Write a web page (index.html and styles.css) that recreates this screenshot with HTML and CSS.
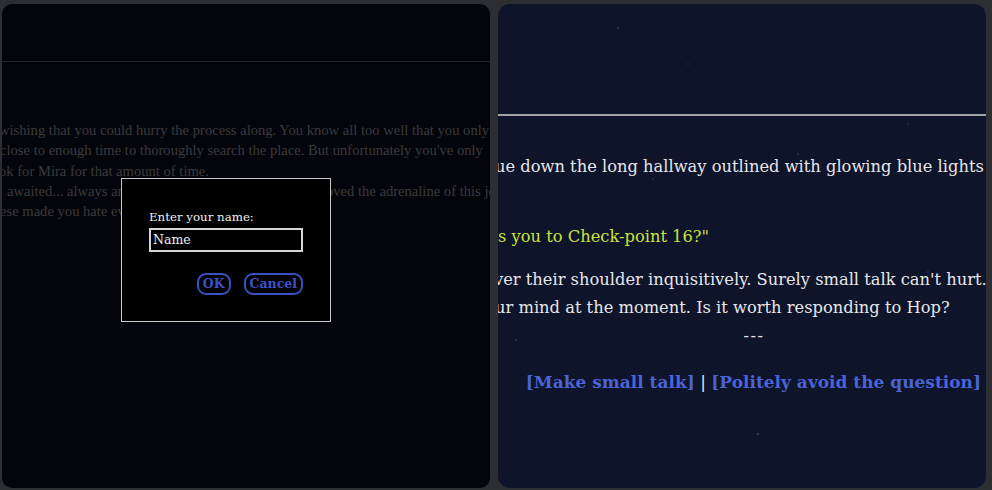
FILE: index.html
```html
<!DOCTYPE html>
<html>
<head>
<meta charset="utf-8">
<link rel="stylesheet" href="styles.css">
</head>
<body>
<div class="screen">
  <section class="panel panel-left">
    <div class="head head-left"></div>
    <div class="story dim">
      <div class="line l1">wishing that you could hurry the process along. You know all too well that you only</div>
      <div class="line l2">close to enough time to thoroughly search the place. But unfortunately you've only</div>
      <div class="line l3">ok for Mira for that amount of time.</div>
      <div class="line l4">awaited... always and ever it seemed. But you always loved the adrenaline of this job</div>
      <div class="line l5">ese made you hate every second of it.</div>
    </div>
    <div class="dialog">
      <label class="dlg-label">Enter your name:</label>
      <div class="dlg-input">Name</div>
      <div class="dlg-buttons">
        <span class="btn">OK</span>
        <span class="btn">Cancel</span>
      </div>
    </div>
  </section>
  <section class="panel panel-right">
    <div class="head head-right"></div>
    <div class="story bright">
      <div class="line r1">ue down the long hallway outlined with glowing blue lights</div>
      <div class="line r2 speech">s you to Check-point 16?"</div>
      <div class="line r3">ver their shoulder inquisitively. Surely small talk can't hurt..</div>
      <div class="line r4">ur mind at the moment. Is it worth responding to Hop?</div>
      <div class="line sep">---</div>
      <div class="line choices"><a class="choice">[Make small talk]</a> <span class="bar">|</span> <a class="choice">[Politely avoid the question]</a></div>
    </div>
  </section>
</div>
</body>
</html>
```

FILE: styles.css
```css
html, body {
  margin: 0;
  padding: 0;
  background: #2d2e32;
  width: 992px;
  height: 490px;
  overflow: hidden;
}

.screen {
  display: flex;
  gap: 8px;
  padding: 4px 6px 0 2px;
  height: 486px;
  box-sizing: border-box;
  font-family: "DejaVu Serif", serif;
}

.panel {
  position: relative;
  width: 488px;
  height: 484px;
  overflow: hidden;
  flex: none;
}

.panel-left {
  background: #04050a;
  border-radius: 10px;
}

.panel-right {
  background-color: #0e1429;
  background-image:
    radial-gradient(circle at 120px 24px, #1f2b4d 0 1px, transparent 1.5px),
    radial-gradient(circle at 190px 60px, #1c2746 0 1px, transparent 1.5px),
    radial-gradient(circle at 300px 150px, #1f2b4d 0 1px, transparent 1.5px),
    radial-gradient(circle at 260px 430px, #2c3c6c 0 1px, transparent 1.5px),
    radial-gradient(circle at 155px 175px, #1c2746 0 1px, transparent 1.5px),
    radial-gradient(circle at 430px 268px, #1f2b4d 0 1px, transparent 1.5px),
    radial-gradient(circle at 18px 336px, #1f2b4d 0 1px, transparent 1.5px),
    radial-gradient(circle at 410px 120px, #1c2746 0 1px, transparent 1.5px);
  border-radius: 12px;
}

.head-left {
  height: 57px;
  border-bottom: 1px solid #242428;
}

.head-right {
  height: 110px;
  border-bottom: 2px solid #a3a3a6;
}

.story {
  white-space: nowrap;
}

.dim {
  color: #3a3a3c;
  font-family: "Liberation Serif", serif;
  font-size: 14.6px;
  line-height: 20.3px;
  padding-top: 58px;
}

.l1 { margin-left: -3px; }
.l2 { margin-left: -2px; }
.l3 { margin-left: -3px; }
.l4 { margin-left: 5px; }
.l5 { margin-left: -2px; }

.bright {
  color: #e6e6ea;
  font-size: 16.3px;
  line-height: 28px;
  padding-top: 37px;
}

.r1 { margin-left: -3px; }
.r2 { margin-top: 42px; }
.r3 { margin-top: 15px; margin-left: -4px; }
.r4 { margin-left: -3px; }

.speech {
  color: #c8e23c;
}

.sep {
  text-align: center;
  padding-left: 29px;
  padding-right: 5px;
  letter-spacing: 1.5px;
}

.choices {
  margin-top: 18px;
  text-align: right;
  padding-right: 5px;
  font-size: 17px;
}

.choice {
  color: #4a63d6;
  font-weight: bold;
}

.bar {
  color: #e6e6ea;
}

.dialog {
  position: absolute;
  left: 119px;
  top: 174px;
  width: 210px;
  height: 144px;
  box-sizing: border-box;
  background: #000;
  border: 1px solid #c8c8c8;
  padding: 30px 27px 0 27px;
  display: flex;
  flex-direction: column;
  color: #f0f0f0;
  font-size: 11.8px;
}

.dlg-label {
  line-height: 16px;
}

.dlg-input {
  margin-top: 3px;
  height: 24px;
  box-sizing: border-box;
  border: 2px solid #d6d6d6;
  padding: 0 2px;
  line-height: 20px;
  font-size: 12.5px;
}

.dlg-buttons {
  margin-top: 21px;
  display: flex;
  justify-content: flex-end;
  gap: 13px;
}

.btn {
  border: 2px solid #3a4fc0;
  border-radius: 9px;
  color: #3d52c9;
  font-weight: bold;
  font-size: 12.5px;
  line-height: 18px;
  padding: 0 4px;
}
```
